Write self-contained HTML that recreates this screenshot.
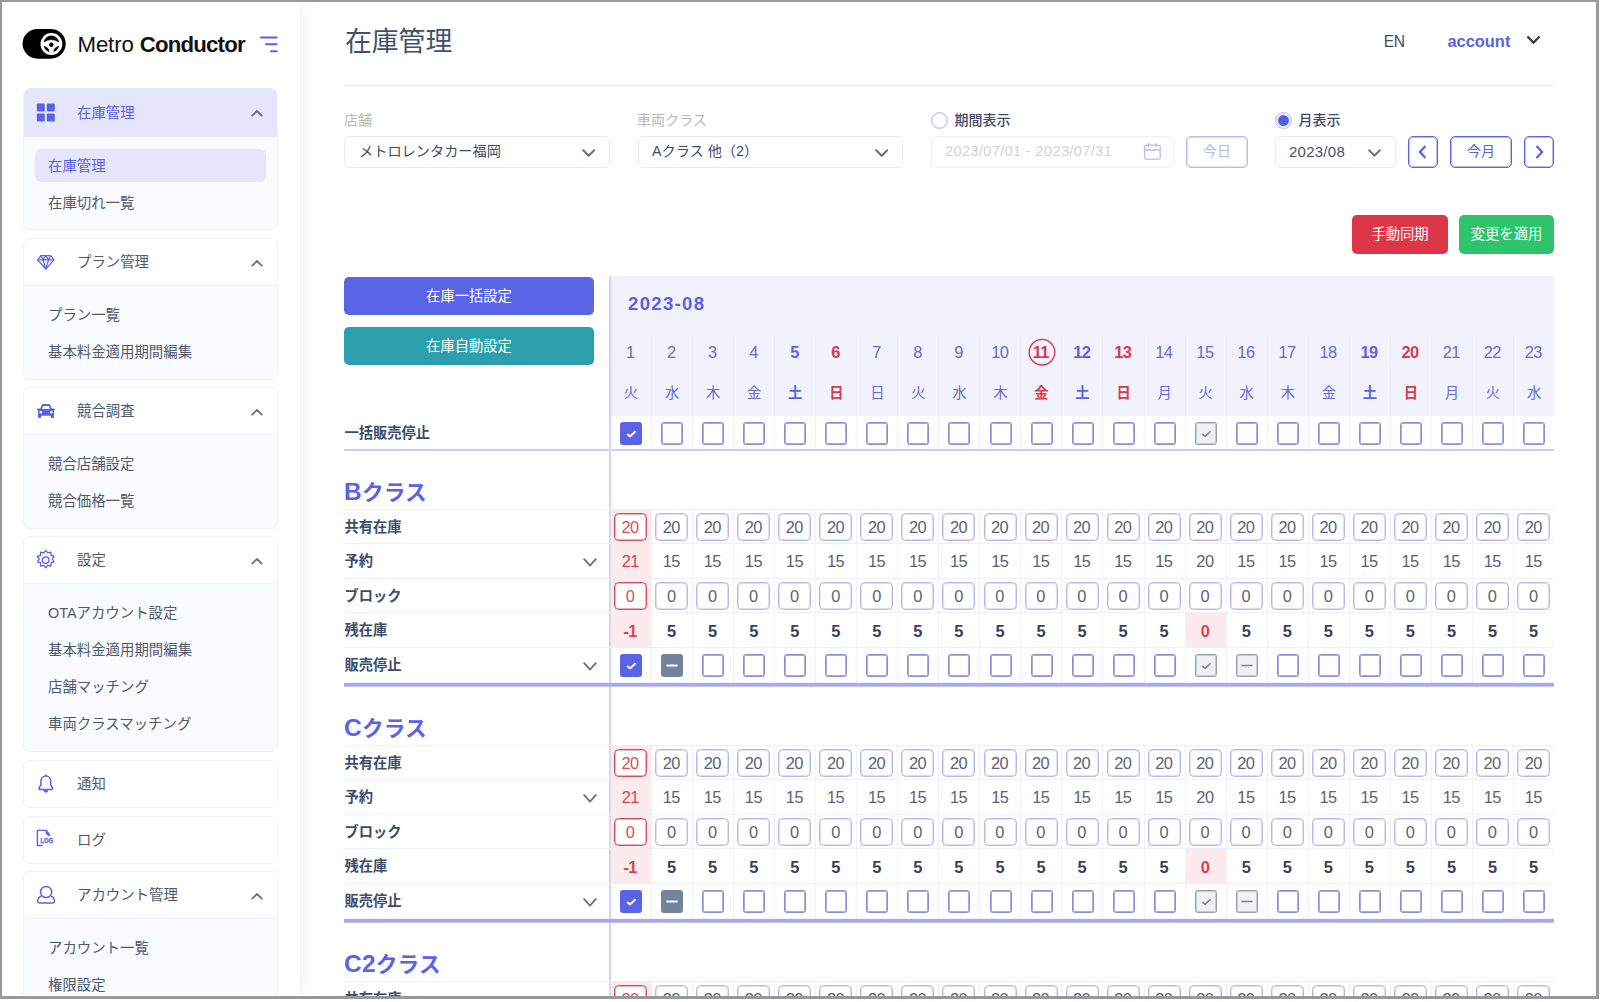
<!DOCTYPE html>
<html lang="ja"><head><meta charset="utf-8"><title>在庫管理 - Metro Conductor</title>
<style>
*{box-sizing:border-box;margin:0;padding:0}
html,body{width:1604px;height:1002px;overflow:hidden;background:#fff}
body{font-family:"Liberation Sans","Noto Sans CJK JP",sans-serif;font-size:14.2px;color:#3f4b66;position:relative}
.abs{position:absolute}
#frame{position:absolute;left:0;top:0;width:1599px;height:999px;overflow:hidden;background:#fff}
#border{position:absolute;left:0;top:0;width:1599px;height:999px;border:solid #999;border-width:2px 3px 3px 2px;z-index:50;pointer-events:none}
#side{position:absolute;left:0;top:0;width:300px;height:999px;background:#fff;box-shadow:0 0 22px rgba(0,0,0,.075);z-index:5}
.logo-txt{position:absolute;left:77.5px;top:32px;font-size:22.2px;line-height:26px;color:#111;letter-spacing:-.1px;white-space:nowrap}
.logo-txt b{font-weight:700;letter-spacing:-.8px}
.card{position:absolute;left:23px;width:255px;border:1px solid #eff0fb;border-radius:7px;background:#fafbff;overflow:hidden}
.card .hd{height:47px;background:#fff;border-bottom:1px solid #eff0fb;position:relative}
.card.act{border-top-color:#e5e6fb}.card.act .hd{background:#e5e6fb;border-bottom-color:#e5e6fb;margin:0 -1px;padding:0 1px}.card.act .hd>*{margin-left:1px}
.card .hd .t{position:absolute;left:53px;top:0;line-height:47px;font-size:14.42px;color:#4f596c}
.card.act .hd .t{color:#5a62e6}
.card .hd svg.ic{position:absolute;left:12px;top:13px}
.card .hd svg.ch{position:absolute;left:226px;top:19px}
.card .it{position:absolute;left:24px;font-size:14.42px;line-height:20px;color:#4f596c;white-space:nowrap}
.card .pill{position:absolute;left:11px;width:231px;height:33px;border-radius:6px;background:#e5e6fb}
h1{position:absolute;left:345px;top:21.5px;font-size:26.8px;line-height:40px;font-weight:400;color:#3e5172;letter-spacing:0}
.hr{position:absolute;left:344px;top:85px;width:1210px;height:1px;background:#e8ebf2}
.lab{position:absolute;font-size:14px;line-height:20px;color:#b7b7b7;white-space:nowrap}
.sel{position:absolute;top:136px;height:32px;border:1px solid #e8eaf2;border-radius:5px;background:#fff;font-size:14.2px;line-height:29px;padding-left:14px;color:#3f4b66;white-space:nowrap;overflow:hidden}
.rl{position:absolute;font-size:14px;line-height:20px;color:#3f4b66;font-weight:500;white-space:nowrap}
.radio{position:absolute;width:17px;height:17px;border-radius:50%;border:1px solid #bbbef3;box-shadow:inset 0 0 0 1px rgba(187,190,243,.45);background:#fff}
.radio.on:after{content:"";position:absolute;left:2px;top:2px;width:11px;height:11px;border-radius:50%;background:#5560e0}
.ob{position:absolute;top:136px;height:32px;border:1px solid #6068e0;box-shadow:inset 0 0 0 1px rgba(96,104,224,.45);border-radius:5px;background:#fff;color:#5a62e6;font-size:14px;line-height:29px;text-align:center}
.btn{position:absolute;color:#fff;border-radius:5px;text-align:center;font-size:14.3px;white-space:nowrap}
#tbl{position:absolute;left:0;top:0}
.vline{position:absolute;left:609px;top:276px;width:3px;height:730px;background:linear-gradient(to right,#d3d5f3 0 1px,#d8daf5 1px 2px,rgba(230,232,251,.6) 2px 3px)}
.thbg{position:absolute;left:611px;top:276px;width:943px;height:140px;background:#f1f2fd}
.cs{position:absolute;width:1px;background:#f0f1fb}
.hl{position:absolute;left:344px;width:1210px;height:1px;background:#eeeff6}
.tk{position:absolute;left:344px;width:1210px;height:5px;background:linear-gradient(to bottom,rgba(168,171,234,.15) 0 1px,#a8abea 1px 4px,rgba(168,171,234,.7) 4px 5px)}
.c{position:absolute;width:41px;text-align:center;line-height:21px;font-size:16.4px;letter-spacing:-.6px;white-space:nowrap;margin-left:-.8px}.wd{font-size:14.3px;font-weight:400;letter-spacing:0;line-height:20px;margin-left:0}.wd.sat,.wd.sun{font-weight:700}
.dn{color:#656cd6}
.sat{color:#5a62e6;font-weight:700}
.sun{color:#d93a4a;font-weight:700}
.rowl{position:absolute;left:344.5px;font-weight:700;font-size:14.25px;line-height:20px;color:#3c4d6c;white-space:nowrap}
.cls b{font-size:24.4px;letter-spacing:.3px}.cls{position:absolute;left:344px;font-weight:700;font-size:21.7px;line-height:30px;color:#5a62e6;white-space:nowrap;letter-spacing:.1px}
.in{position:absolute;width:33px;height:28px;border:1px solid #b6b9ee;box-shadow:inset 0 0 0 1px rgba(182,185,238,.45);border-radius:4.5px;background:#fff;text-align:center;line-height:27px;font-size:16.4px;letter-spacing:-.6px;text-indent:-.8px;color:#5a6374}
.in.r{border-color:#d6505d;box-shadow:inset 0 0 0 1px rgba(214,80,93,.45);color:#d8505e}
.n{color:#5a6374}
.nb{color:#34425e;font-weight:700}
.red{color:#d9434f}
.cb{position:absolute;width:22px;height:23px;border:1px solid #8a8fdc;box-shadow:inset 0 0 0 1px rgba(138,143,220,.75);border-radius:2.5px;background:#fff}
.cb.on{background:#5a63e6;border-color:#5a63e6;box-shadow:none}
.cb.ind{background:#74849c;border-color:#74849c;box-shadow:none}
.cb.dis{background:#eff1f4;border-color:#99a0a9;box-shadow:inset 0 0 0 1px rgba(153,160,169,.45)}
.cb svg{position:absolute;left:-1px;top:-1px}
.pk{position:absolute;background:#fdeaec}
</style></head><body>
<div id="frame">
<div id="side"><svg class="abs" style="left:22px;top:29px" width="45" height="30" viewBox="0 0 45 30">
<rect x="0.6" y="0" width="43.1" height="29.7" rx="14.85" fill="#000"/>
<circle cx="29.4" cy="15" r="10.9" fill="#fff"/>
<path d="M22 12.900 C23.100 9.100 26 6.900 29.4 6.900 C32.800 6.900 35.700 9.100 36.800 12.900 Q29.4 8.200 22 12.900 Z" fill="#000" stroke="#000" stroke-width=".7" stroke-linejoin="round"/>
<circle cx="29.3" cy="15.800" r="2.25" fill="#000"/>
<path d="M22 17.300 A7.9 7.9 0 0 0 26.900 22.600 Q27.300 18.900 22 17.300 Z" fill="#000" stroke="#000" stroke-width=".6" stroke-linejoin="round"/>
<path d="M36.800 17.300 A7.9 7.9 0 0 1 31.900 22.600 Q31.500 18.900 36.800 17.300 Z" fill="#000" stroke="#000" stroke-width=".6" stroke-linejoin="round"/>
</svg><div class="logo-txt">Metro <b>Conductor</b></div><svg class="abs" style="left:259px;top:35px" width="20" height="18" viewBox="0 0 20 18"><g stroke="#5a62e6" stroke-width="2" stroke-linecap="round"><path d="M2 2.4 H17.6"/><path d="M7 9.3 H17.6"/><path d="M12 16.2 H17.6"/></g></svg><div class="card act" style="top:88px;height:142px"><div class="hd" style="height:48px;"><svg class="ic" width="20" height="20" viewBox="0 0 20 20" style="left:12px;top:14px;overflow:visible"><g fill="#5a62e6"><rect x="0.8" y="0.6" width="8" height="8" rx="1"/><rect x="10.8" y="0.6" width="8" height="8" rx="1"/><rect x="0.8" y="10.6" width="8" height="8" rx="1"/><rect x="10.8" y="10.6" width="8" height="8" rx="1"/></g></svg><span class="t" style="line-height:49px">在庫管理</span><svg class="ch" width="13" height="9" viewBox="0 0 13 9"><path d="M2.2 7.6 L7 3 L11.800 7.6" fill="none" stroke="#687287" stroke-width="1.8" stroke-linecap="round" stroke-linejoin="round"/></svg></div><div class="pill" style="top:59.5px"></div><div class="it" style="top:67.1px;color:#5a62e6">在庫管理</div><div class="it" style="top:104.1px">在庫切れ一覧</div></div><div class="card" style="top:238px;height:142px"><div class="hd"><svg class="ic" width="20" height="20" viewBox="0 0 20 20" style="overflow:visible"><g fill="none" stroke="#5a62e6" stroke-width="1.2" stroke-linejoin="round"><path d="M5 3.6 H14.6 L18 7.8 L9.8 17 L1.6 7.8 Z"/><path d="M1.6 7.8 H18 M5 3.6 L7 7.8 L9.8 17 L12.6 7.8 L14.6 3.6 M7 7.8 L9.8 3.6 L12.6 7.8"/></g></svg><span class="t">プラン管理</span><svg class="ch" width="13" height="9" viewBox="0 0 13 9"><path d="M2.2 7.6 L7 3 L11.800 7.6" fill="none" stroke="#687287" stroke-width="1.8" stroke-linecap="round" stroke-linejoin="round"/></svg></div><div class="it" style="top:66.1px">プラン一覧</div><div class="it" style="top:103.1px">基本料金適用期間編集</div></div><div class="card" style="top:387px;height:142px"><div class="hd"><svg class="ic" width="20" height="20" viewBox="0 0 20 20" style="overflow:visible"><path fill="#5a62e6" fill-rule="evenodd" d="M4.2 7.6 L5.6 4.2 C5.9 3.4 6.5 3 7.3 3 H12.7 C13.5 3 14.1 3.4 14.4 4.2 L15.800 7.6 H17.9 C18.5 7.6 18.9 8 18.9 8.5 V8.7 C18.9 9.1 18.5 9.4 18 9.4 H17.6 C17.9 9.8 18 10.3 18 10.8 V16.2 C18 16.7 17.6 17 17.2 17 H15.6 C15.1 17 14.8 16.7 14.8 16.2 V14.8 H5.2 V16.2 C5.2 16.7 4.9 17 4.4 17 H2.8 C2.4 17 2 16.7 2 16.2 V10.8 C2 10.3 2.1 9.8 2.4 9.4 H2 C1.5 9.4 1.1 9.1 1.1 8.700 V8.5 C1.1 8 1.5 7.6 2.1 7.6 Z M7.2 4.9 L6 8 H14 L12.8 4.9 Z M4.7 10.100 A1.35 1.25 0 1 0 4.7 12.600 A1.35 1.25 0 1 0 4.7 10.100 Z M15.3 10.100 A1.35 1.25 0 1 0 15.3 12.600 A1.35 1.25 0 1 0 15.3 10.100 Z"/></svg><span class="t">競合調査</span><svg class="ch" width="13" height="9" viewBox="0 0 13 9"><path d="M2.2 7.6 L7 3 L11.800 7.6" fill="none" stroke="#687287" stroke-width="1.8" stroke-linecap="round" stroke-linejoin="round"/></svg></div><div class="it" style="top:66.1px">競合店舗設定</div><div class="it" style="top:103.1px">競合価格一覧</div></div><div class="card" style="top:536px;height:216px"><div class="hd"><svg class="ic" width="20" height="20" viewBox="0 0 20 20" style="overflow:visible"><g fill="none" stroke="#5a62e6" stroke-width="1.3" stroke-linejoin="round"><circle cx="9.7" cy="10.1" r="3.3"/><path d="M9.80 0.40 L11.81 2.92 L14.91 2.06 L15.06 5.28 L18.07 6.41 L16.30 9.10 L18.07 11.79 L15.06 12.92 L14.91 16.14 L11.81 15.28 L9.80 17.80 L7.79 15.28 L4.69 16.14 L4.54 12.92 L1.53 11.79 L3.30 9.10 L1.53 6.41 L4.54 5.28 L4.69 2.06 L7.79 2.92 Z"/></g></svg><span class="t">設定</span><svg class="ch" width="13" height="9" viewBox="0 0 13 9"><path d="M2.2 7.6 L7 3 L11.800 7.6" fill="none" stroke="#687287" stroke-width="1.8" stroke-linecap="round" stroke-linejoin="round"/></svg></div><div class="it" style="top:66.1px">OTAアカウント設定</div><div class="it" style="top:103.1px">基本料金適用期間編集</div><div class="it" style="top:140.1px">店舗マッチング</div><div class="it" style="top:177.1px">車両クラスマッチング</div></div><div class="card" style="top:760px;height:48px"><div class="hd" style="border-bottom:0;"><svg class="ic" width="20" height="20" viewBox="0 0 20 20" style="overflow:visible"><g fill="none" stroke="#5a62e6" stroke-width="1.5" stroke-linejoin="round" stroke-linecap="round"><path d="M9.8 1.1 V2.1 M9.8 2.1 C6.7 2.1 4.9 4.5 4.9 7.3 V10.4 C4.900 11.800 3 13.200 3 14.4 C3 15.2 3.5 15.600 4.2 15.600 H15.4 C16.1 15.600 16.6 15.2 16.6 14.4 C16.6 13.200 14.7 11.800 14.7 10.4 V7.3 C14.7 4.5 12.9 2.1 9.8 2.1 Z"/></g><path d="M7.700 16.2 A2.1 2.1 0 0 0 11.900 16.2 Z" fill="#5a62e6" stroke="#5a62e6" stroke-width=".8" stroke-linejoin="round"/></svg><span class="t">通知</span></div></div><div class="card" style="top:816px;height:48px"><div class="hd" style="border-bottom:0;"><svg class="ic" width="20" height="20" viewBox="0 0 20 20" style="overflow:visible;top:12px"><path d="M5.8 16.500 H1.400 V1.400 H10.4 L13.800 6.2" fill="none" stroke="#5a62e6" stroke-width="1.4" stroke-linejoin="round" stroke-linecap="round"/><path d="M9.6 1 L14.200 6.9 L12.6 6.9 L9.6 4.4 Z" fill="#5a62e6"/><text x="4.5" y="14.300" font-family="Liberation Sans,sans-serif" font-weight="700" font-size="7.4" fill="#5a62e6" stroke="#5a62e6" stroke-width=".35" textLength="12.6" lengthAdjust="spacingAndGlyphs">LOG</text></svg><span class="t">ログ</span></div></div><div class="card" style="top:871px;height:200px"><div class="hd"><svg class="ic" width="20" height="20" viewBox="0 0 20 20" style="overflow:visible;top:12px"><g fill="none" stroke="#5a62e6" stroke-width="1.5" stroke-linejoin="round"><circle cx="10.100" cy="8" r="5.600"/><path d="M5.400 12 C3 12.900 1.700 15 1.700 17.300 C1.700 18.400 2.400 19 3.400 19 H16.800 C17.800 19 18.500 18.400 18.500 17.300 C18.500 15 17.200 12.900 14.800 12"/></g></svg><span class="t">アカウント管理</span><svg class="ch" width="13" height="9" viewBox="0 0 13 9"><path d="M2.2 7.6 L7 3 L11.800 7.6" fill="none" stroke="#687287" stroke-width="1.8" stroke-linecap="round" stroke-linejoin="round"/></svg></div><div class="it" style="top:66.1px">アカウント一覧</div><div class="it" style="top:103.1px">権限設定</div></div></div>
<div id="main"><h1>在庫管理</h1><div class="abs" style="left:1383.7px;top:31px;font-size:15.6px;line-height:22px;color:#3f4b66;letter-spacing:-.3px">EN</div><div class="abs" style="left:1447.5px;top:30px;font-size:16.4px;line-height:22px;color:#5a62e6;font-weight:700">account</div><svg class="abs" style="left:1526.5px;top:36.3px" width="13" height="8.2" viewBox="0 0 13 8.2"><path d="M1.2 1.2 L6.5 6.799999999999999 L11.8 1.2" fill="none" stroke="#2f3b52" stroke-width="2.3" stroke-linecap="round" stroke-linejoin="round"/></svg><div class="hr"></div><div class="lab" style="left:344px;top:110px">店舗</div><div class="sel" style="left:344px;width:266px">メトロレンタカー福岡</div><svg class="abs" style="left:582px;top:148.5px" width="13.4" height="8.2" viewBox="0 0 13.4 8.2"><path d="M1.2 1.2 L6.7 6.799999999999999 L12.200000000000001 1.2" fill="none" stroke="#667085" stroke-width="2.0" stroke-linecap="round" stroke-linejoin="round"/></svg><div class="lab" style="left:637px;top:110px">車両クラス</div><div class="sel" style="left:638px;width:265px;padding-left:13px">Aクラス 他（2）</div><svg class="abs" style="left:875px;top:148.5px" width="13.4" height="8.2" viewBox="0 0 13.4 8.2"><path d="M1.2 1.2 L6.7 6.799999999999999 L12.200000000000001 1.2" fill="none" stroke="#667085" stroke-width="2.0" stroke-linecap="round" stroke-linejoin="round"/></svg><div class="radio" style="left:931px;top:112px"></div><div class="rl" style="left:954.5px;top:110px">期間表示</div><div class="sel" style="left:931px;width:243px;border-color:#eceef6;color:#d2d2d2;padding-left:13px;font-size:14.6px;letter-spacing:.35px"><span style="display:inline-block;width:168px;overflow:hidden;vertical-align:top">2023/07/01 - 2023/07/31</span></div><svg class="abs" style="left:1143px;top:142px" width="19" height="19" viewBox="0 0 19 19"><g fill="none" stroke="#b9bcf3" stroke-width="1.3"><rect x="1.6" y="3.2" width="15.6" height="14" rx="1.6"/><path d="M1.6 8 H17.2 M5.6 1 V5 M13.2 1 V5"/></g></svg><div class="ob" style="left:1186px;width:62px;border-color:#b9bcf3;box-shadow:inset 0 0 0 1px rgba(185,188,243,.5);color:#b4b8f2">今日</div><div class="radio on" style="left:1275px;top:112px"></div><div class="rl" style="left:1298.5px;top:110px">月表示</div><div class="sel" style="left:1275px;width:121px;font-size:15px;padding-left:13px;letter-spacing:.25px;color:#46526a">2023/08</div><svg class="abs" style="left:1368px;top:148.8px" width="13" height="8" viewBox="0 0 13 8"><path d="M1.2 1.2 L6.5 6.6 L11.8 1.2" fill="none" stroke="#667085" stroke-width="2.0" stroke-linecap="round" stroke-linejoin="round"/></svg><div class="ob" style="left:1408px;width:30px"><svg class="abs" style="left:8px;top:6.5px" width="11" height="16" viewBox="0 0 11 16"><path d="M7.800 2.700 L2.900 8 L7.800 13.300" fill="none" stroke="#5a62e6" stroke-width="2.3" stroke-linecap="round" stroke-linejoin="round"/></svg></div><div class="ob" style="left:1450px;width:62px">今月</div><div class="ob" style="left:1524px;width:30px"><svg class="abs" style="left:9px;top:6.5px" width="11" height="16" viewBox="0 0 11 16"><path d="M3.200 2.700 L8.100 8 L3.200 13.300" fill="none" stroke="#5a62e6" stroke-width="2.3" stroke-linecap="round" stroke-linejoin="round"/></svg></div><div class="btn" style="left:1352px;top:214.5px;width:96px;height:39px;line-height:38px;background:#dd3648">手動同期</div><div class="btn" style="left:1459px;top:214.5px;width:95px;height:39px;line-height:38px;background:#2ec46c">変更を適用</div><div class="btn" style="left:344px;top:277px;width:250px;height:38px;line-height:38px;background:#5a64e6">在庫一括設定</div><div class="btn" style="left:344px;top:327px;width:250px;height:38px;line-height:38px;background:#2b9fab">在庫自動設定</div>
<div id="tbl"><div class="thbg"></div><div class="abs" style="left:628px;top:292.2px;font-size:18.6px;line-height:24px;font-weight:700;color:#5a62e6;letter-spacing:1.3px;white-space:nowrap">2023-08</div><div class="c dn" style="left:610.5px;top:342px">1</div><div class="c wd dn" style="left:610.5px;top:383px">火</div><div class="c dn" style="left:651.6px;top:342px">2</div><div class="c wd dn" style="left:651.6px;top:383px">水</div><div class="c dn" style="left:692.6px;top:342px">3</div><div class="c wd dn" style="left:692.6px;top:383px">木</div><div class="c dn" style="left:733.7px;top:342px">4</div><div class="c wd dn" style="left:733.7px;top:383px">金</div><div class="c sat" style="left:774.7px;top:342px">5</div><div class="c wd sat" style="left:774.7px;top:383px">土</div><div class="c sun" style="left:815.8px;top:342px">6</div><div class="c wd sun" style="left:815.8px;top:383px">日</div><div class="c dn" style="left:856.8px;top:342px">7</div><div class="c wd dn" style="left:856.8px;top:383px">日</div><div class="c dn" style="left:897.9px;top:342px">8</div><div class="c wd dn" style="left:897.9px;top:383px">火</div><div class="c dn" style="left:938.9px;top:342px">9</div><div class="c wd dn" style="left:938.9px;top:383px">水</div><div class="c dn" style="left:980.0px;top:342px">10</div><div class="c wd dn" style="left:980.0px;top:383px">木</div><svg class="abs" style="left:1026.5px;top:337px" width="30" height="30" viewBox="0 0 30 30"><circle cx="15" cy="15.2" r="12.8" fill="none" stroke="#d93a4a" stroke-width="1.4"/></svg><div class="c sun" style="left:1021.0px;top:342px">11</div><div class="c wd sun" style="left:1021.0px;top:383px">金</div><div class="c sat" style="left:1062.0px;top:342px">12</div><div class="c wd sat" style="left:1062.0px;top:383px">土</div><div class="c sun" style="left:1103.1px;top:342px">13</div><div class="c wd sun" style="left:1103.1px;top:383px">日</div><div class="c dn" style="left:1144.1px;top:342px">14</div><div class="c wd dn" style="left:1144.1px;top:383px">月</div><div class="c dn" style="left:1185.2px;top:342px">15</div><div class="c wd dn" style="left:1185.2px;top:383px">火</div><div class="c dn" style="left:1226.2px;top:342px">16</div><div class="c wd dn" style="left:1226.2px;top:383px">水</div><div class="c dn" style="left:1267.3px;top:342px">17</div><div class="c wd dn" style="left:1267.3px;top:383px">木</div><div class="c dn" style="left:1308.3px;top:342px">18</div><div class="c wd dn" style="left:1308.3px;top:383px">金</div><div class="c sat" style="left:1349.4px;top:342px">19</div><div class="c wd sat" style="left:1349.4px;top:383px">土</div><div class="c sun" style="left:1390.4px;top:342px">20</div><div class="c wd sun" style="left:1390.4px;top:383px">日</div><div class="c dn" style="left:1431.5px;top:342px">21</div><div class="c wd dn" style="left:1431.5px;top:383px">月</div><div class="c dn" style="left:1472.5px;top:342px">22</div><div class="c wd dn" style="left:1472.5px;top:383px">火</div><div class="c dn" style="left:1513.6px;top:342px">23</div><div class="c wd dn" style="left:1513.6px;top:383px">水</div><div class="cs" style="left:651px;top:336px;height:80px;background:#eaecf8"></div><div class="cs" style="left:651px;top:416px;height:34px"></div><div class="cs" style="left:692px;top:336px;height:80px;background:#eaecf8"></div><div class="cs" style="left:692px;top:416px;height:34px"></div><div class="cs" style="left:733px;top:336px;height:80px;background:#eaecf8"></div><div class="cs" style="left:733px;top:416px;height:34px"></div><div class="cs" style="left:774px;top:336px;height:80px;background:#eaecf8"></div><div class="cs" style="left:774px;top:416px;height:34px"></div><div class="cs" style="left:815px;top:336px;height:80px;background:#eaecf8"></div><div class="cs" style="left:815px;top:416px;height:34px"></div><div class="cs" style="left:856px;top:336px;height:80px;background:#eaecf8"></div><div class="cs" style="left:856px;top:416px;height:34px"></div><div class="cs" style="left:897px;top:336px;height:80px;background:#eaecf8"></div><div class="cs" style="left:897px;top:416px;height:34px"></div><div class="cs" style="left:938px;top:336px;height:80px;background:#eaecf8"></div><div class="cs" style="left:938px;top:416px;height:34px"></div><div class="cs" style="left:979px;top:336px;height:80px;background:#eaecf8"></div><div class="cs" style="left:979px;top:416px;height:34px"></div><div class="cs" style="left:1020px;top:336px;height:80px;background:#eaecf8"></div><div class="cs" style="left:1020px;top:416px;height:34px"></div><div class="cs" style="left:1061px;top:336px;height:80px;background:#eaecf8"></div><div class="cs" style="left:1061px;top:416px;height:34px"></div><div class="cs" style="left:1102px;top:336px;height:80px;background:#eaecf8"></div><div class="cs" style="left:1102px;top:416px;height:34px"></div><div class="cs" style="left:1144px;top:336px;height:80px;background:#eaecf8"></div><div class="cs" style="left:1144px;top:416px;height:34px"></div><div class="cs" style="left:1185px;top:336px;height:80px;background:#eaecf8"></div><div class="cs" style="left:1185px;top:416px;height:34px"></div><div class="cs" style="left:1226px;top:336px;height:80px;background:#eaecf8"></div><div class="cs" style="left:1226px;top:416px;height:34px"></div><div class="cs" style="left:1267px;top:336px;height:80px;background:#eaecf8"></div><div class="cs" style="left:1267px;top:416px;height:34px"></div><div class="cs" style="left:1308px;top:336px;height:80px;background:#eaecf8"></div><div class="cs" style="left:1308px;top:416px;height:34px"></div><div class="cs" style="left:1349px;top:336px;height:80px;background:#eaecf8"></div><div class="cs" style="left:1349px;top:416px;height:34px"></div><div class="cs" style="left:1390px;top:336px;height:80px;background:#eaecf8"></div><div class="cs" style="left:1390px;top:416px;height:34px"></div><div class="cs" style="left:1431px;top:336px;height:80px;background:#eaecf8"></div><div class="cs" style="left:1431px;top:416px;height:34px"></div><div class="cs" style="left:1472px;top:336px;height:80px;background:#eaecf8"></div><div class="cs" style="left:1472px;top:416px;height:34px"></div><div class="cs" style="left:1513px;top:336px;height:80px;background:#eaecf8"></div><div class="cs" style="left:1513px;top:416px;height:34px"></div><div class="rowl" style="top:423.2px">一括販売停止</div><div class="cb on" style="left:620.0px;top:421.5px"><svg width="22" height="23" viewBox="0 0 22 23"><path d="M7.7 12.5 L10.2 14.4 L15 9.8" fill="none" stroke="#fff" stroke-width="2" stroke-linecap="round" stroke-linejoin="round"/></svg></div><div class="cb" style="left:661.1px;top:421.5px"></div><div class="cb" style="left:702.1px;top:421.5px"></div><div class="cb" style="left:743.2px;top:421.5px"></div><div class="cb" style="left:784.2px;top:421.5px"></div><div class="cb" style="left:825.3px;top:421.5px"></div><div class="cb" style="left:866.3px;top:421.5px"></div><div class="cb" style="left:907.4px;top:421.5px"></div><div class="cb" style="left:948.4px;top:421.5px"></div><div class="cb" style="left:989.5px;top:421.5px"></div><div class="cb" style="left:1030.5px;top:421.5px"></div><div class="cb" style="left:1071.5px;top:421.5px"></div><div class="cb" style="left:1112.6px;top:421.5px"></div><div class="cb" style="left:1153.6px;top:421.5px"></div><div class="cb dis" style="left:1194.7px;top:421.5px"><svg width="22" height="23" viewBox="0 0 22 23"><path d="M7.7 12.5 L10.2 14.4 L15 9.8" fill="none" stroke="#7a828c" stroke-width="1.5" stroke-linecap="round" stroke-linejoin="round"/></svg></div><div class="cb" style="left:1235.7px;top:421.5px"></div><div class="cb" style="left:1276.8px;top:421.5px"></div><div class="cb" style="left:1317.8px;top:421.5px"></div><div class="cb" style="left:1358.9px;top:421.5px"></div><div class="cb" style="left:1399.9px;top:421.5px"></div><div class="cb" style="left:1441.0px;top:421.5px"></div><div class="cb" style="left:1482.0px;top:421.5px"></div><div class="cb" style="left:1523.1px;top:421.5px"></div><div class="hl" style="top:449px;background:#c9ccf4;height:1.5px"></div><div class="vline"></div><div class="cls" style="top:477px"><b>B</b>クラス</div><div class="pk" style="left:611px;top:510px;width:40px;height:138px"></div><div class="pk" style="left:1186px;top:613px;width:40px;height:35px"></div><div class="hl" style="top:509px"></div><div class="hl" style="top:543px"></div><div class="hl" style="top:578px"></div><div class="hl" style="top:612px"></div><div class="hl" style="top:647px"></div><div class="cs" style="left:651px;top:510px;height:173px"></div><div class="cs" style="left:692px;top:510px;height:173px"></div><div class="cs" style="left:733px;top:510px;height:173px"></div><div class="cs" style="left:774px;top:510px;height:173px"></div><div class="cs" style="left:815px;top:510px;height:173px"></div><div class="cs" style="left:856px;top:510px;height:173px"></div><div class="cs" style="left:897px;top:510px;height:173px"></div><div class="cs" style="left:938px;top:510px;height:173px"></div><div class="cs" style="left:979px;top:510px;height:173px"></div><div class="cs" style="left:1020px;top:510px;height:173px"></div><div class="cs" style="left:1061px;top:510px;height:173px"></div><div class="cs" style="left:1102px;top:510px;height:173px"></div><div class="cs" style="left:1144px;top:510px;height:173px"></div><div class="cs" style="left:1185px;top:510px;height:173px"></div><div class="cs" style="left:1226px;top:510px;height:173px"></div><div class="cs" style="left:1267px;top:510px;height:173px"></div><div class="cs" style="left:1308px;top:510px;height:173px"></div><div class="cs" style="left:1349px;top:510px;height:173px"></div><div class="cs" style="left:1390px;top:510px;height:173px"></div><div class="cs" style="left:1431px;top:510px;height:173px"></div><div class="cs" style="left:1472px;top:510px;height:173px"></div><div class="cs" style="left:1513px;top:510px;height:173px"></div><div class="rowl" style="top:516.8px">共有在庫</div><div class="rowl" style="top:551.0px">予約</div><svg class="abs" style="left:582.5px;top:557.9px" width="14" height="9" viewBox="0 0 14 9"><path d="M1.2 1.2 L7.0 7.6 L12.8 1.2" fill="none" stroke="#6b7486" stroke-width="1.9" stroke-linecap="round" stroke-linejoin="round"/></svg><div class="rowl" style="top:585.7px">ブロック</div><div class="rowl" style="top:620.4px">残在庫</div><div class="rowl" style="top:655.2px">販売停止</div><svg class="abs" style="left:582.5px;top:662.15px" width="14" height="9" viewBox="0 0 14 9"><path d="M1.2 1.2 L7.0 7.6 L12.8 1.2" fill="none" stroke="#6b7486" stroke-width="1.9" stroke-linecap="round" stroke-linejoin="round"/></svg><div class="in r" style="left:614.0px;top:513.2px">20</div><div class="c red" style="left:610.5px;top:551.4px">21</div><div class="in r" style="left:614.0px;top:582.1px">0</div><div class="c nb red" style="left:610.5px;top:620.8px">-1</div><div class="cb on" style="left:620.0px;top:654.1px"><svg width="22" height="23" viewBox="0 0 22 23"><path d="M7.7 12.5 L10.2 14.4 L15 9.8" fill="none" stroke="#fff" stroke-width="2" stroke-linecap="round" stroke-linejoin="round"/></svg></div><div class="in" style="left:655.1px;top:513.2px">20</div><div class="c n" style="left:651.6px;top:551.4px">15</div><div class="in" style="left:655.1px;top:582.1px">0</div><div class="c nb" style="left:651.6px;top:620.8px">5</div><div class="cb ind" style="left:661.1px;top:654.1px"><svg width="22" height="23" viewBox="0 0 22 23"><path d="M6.2 11.5 H15.8" fill="none" stroke="#fff" stroke-width="2" stroke-linecap="round"/></svg></div><div class="in" style="left:696.1px;top:513.2px">20</div><div class="c n" style="left:692.6px;top:551.4px">15</div><div class="in" style="left:696.1px;top:582.1px">0</div><div class="c nb" style="left:692.6px;top:620.8px">5</div><div class="cb" style="left:702.1px;top:654.1px"></div><div class="in" style="left:737.2px;top:513.2px">20</div><div class="c n" style="left:733.7px;top:551.4px">15</div><div class="in" style="left:737.2px;top:582.1px">0</div><div class="c nb" style="left:733.7px;top:620.8px">5</div><div class="cb" style="left:743.2px;top:654.1px"></div><div class="in" style="left:778.2px;top:513.2px">20</div><div class="c n" style="left:774.7px;top:551.4px">15</div><div class="in" style="left:778.2px;top:582.1px">0</div><div class="c nb" style="left:774.7px;top:620.8px">5</div><div class="cb" style="left:784.2px;top:654.1px"></div><div class="in" style="left:819.3px;top:513.2px">20</div><div class="c n" style="left:815.8px;top:551.4px">15</div><div class="in" style="left:819.3px;top:582.1px">0</div><div class="c nb" style="left:815.8px;top:620.8px">5</div><div class="cb" style="left:825.3px;top:654.1px"></div><div class="in" style="left:860.3px;top:513.2px">20</div><div class="c n" style="left:856.8px;top:551.4px">15</div><div class="in" style="left:860.3px;top:582.1px">0</div><div class="c nb" style="left:856.8px;top:620.8px">5</div><div class="cb" style="left:866.3px;top:654.1px"></div><div class="in" style="left:901.4px;top:513.2px">20</div><div class="c n" style="left:897.9px;top:551.4px">15</div><div class="in" style="left:901.4px;top:582.1px">0</div><div class="c nb" style="left:897.9px;top:620.8px">5</div><div class="cb" style="left:907.4px;top:654.1px"></div><div class="in" style="left:942.4px;top:513.2px">20</div><div class="c n" style="left:938.9px;top:551.4px">15</div><div class="in" style="left:942.4px;top:582.1px">0</div><div class="c nb" style="left:938.9px;top:620.8px">5</div><div class="cb" style="left:948.4px;top:654.1px"></div><div class="in" style="left:983.5px;top:513.2px">20</div><div class="c n" style="left:980.0px;top:551.4px">15</div><div class="in" style="left:983.5px;top:582.1px">0</div><div class="c nb" style="left:980.0px;top:620.8px">5</div><div class="cb" style="left:989.5px;top:654.1px"></div><div class="in" style="left:1024.5px;top:513.2px">20</div><div class="c n" style="left:1021.0px;top:551.4px">15</div><div class="in" style="left:1024.5px;top:582.1px">0</div><div class="c nb" style="left:1021.0px;top:620.8px">5</div><div class="cb" style="left:1030.5px;top:654.1px"></div><div class="in" style="left:1065.5px;top:513.2px">20</div><div class="c n" style="left:1062.0px;top:551.4px">15</div><div class="in" style="left:1065.5px;top:582.1px">0</div><div class="c nb" style="left:1062.0px;top:620.8px">5</div><div class="cb" style="left:1071.5px;top:654.1px"></div><div class="in" style="left:1106.6px;top:513.2px">20</div><div class="c n" style="left:1103.1px;top:551.4px">15</div><div class="in" style="left:1106.6px;top:582.1px">0</div><div class="c nb" style="left:1103.1px;top:620.8px">5</div><div class="cb" style="left:1112.6px;top:654.1px"></div><div class="in" style="left:1147.6px;top:513.2px">20</div><div class="c n" style="left:1144.1px;top:551.4px">15</div><div class="in" style="left:1147.6px;top:582.1px">0</div><div class="c nb" style="left:1144.1px;top:620.8px">5</div><div class="cb" style="left:1153.6px;top:654.1px"></div><div class="in" style="left:1188.7px;top:513.2px">20</div><div class="c n" style="left:1185.2px;top:551.4px">20</div><div class="in" style="left:1188.7px;top:582.1px">0</div><div class="c nb red" style="left:1185.2px;top:620.8px">0</div><div class="cb dis" style="left:1194.7px;top:654.1px"><svg width="22" height="23" viewBox="0 0 22 23"><path d="M7.7 12.5 L10.2 14.4 L15 9.8" fill="none" stroke="#7a828c" stroke-width="1.5" stroke-linecap="round" stroke-linejoin="round"/></svg></div><div class="in" style="left:1229.7px;top:513.2px">20</div><div class="c n" style="left:1226.2px;top:551.4px">15</div><div class="in" style="left:1229.7px;top:582.1px">0</div><div class="c nb" style="left:1226.2px;top:620.8px">5</div><div class="cb dis" style="left:1235.7px;top:654.1px"><svg width="22" height="23" viewBox="0 0 22 23"><path d="M6.2 11.5 H15.8" fill="none" stroke="#7a828c" stroke-width="1.5" stroke-linecap="round"/></svg></div><div class="in" style="left:1270.8px;top:513.2px">20</div><div class="c n" style="left:1267.3px;top:551.4px">15</div><div class="in" style="left:1270.8px;top:582.1px">0</div><div class="c nb" style="left:1267.3px;top:620.8px">5</div><div class="cb" style="left:1276.8px;top:654.1px"></div><div class="in" style="left:1311.8px;top:513.2px">20</div><div class="c n" style="left:1308.3px;top:551.4px">15</div><div class="in" style="left:1311.8px;top:582.1px">0</div><div class="c nb" style="left:1308.3px;top:620.8px">5</div><div class="cb" style="left:1317.8px;top:654.1px"></div><div class="in" style="left:1352.9px;top:513.2px">20</div><div class="c n" style="left:1349.4px;top:551.4px">15</div><div class="in" style="left:1352.9px;top:582.1px">0</div><div class="c nb" style="left:1349.4px;top:620.8px">5</div><div class="cb" style="left:1358.9px;top:654.1px"></div><div class="in" style="left:1393.9px;top:513.2px">20</div><div class="c n" style="left:1390.4px;top:551.4px">15</div><div class="in" style="left:1393.9px;top:582.1px">0</div><div class="c nb" style="left:1390.4px;top:620.8px">5</div><div class="cb" style="left:1399.9px;top:654.1px"></div><div class="in" style="left:1435.0px;top:513.2px">20</div><div class="c n" style="left:1431.5px;top:551.4px">15</div><div class="in" style="left:1435.0px;top:582.1px">0</div><div class="c nb" style="left:1431.5px;top:620.8px">5</div><div class="cb" style="left:1441.0px;top:654.1px"></div><div class="in" style="left:1476.0px;top:513.2px">20</div><div class="c n" style="left:1472.5px;top:551.4px">15</div><div class="in" style="left:1476.0px;top:582.1px">0</div><div class="c nb" style="left:1472.5px;top:620.8px">5</div><div class="cb" style="left:1482.0px;top:654.1px"></div><div class="in" style="left:1517.1px;top:513.2px">20</div><div class="c n" style="left:1513.6px;top:551.4px">15</div><div class="in" style="left:1517.1px;top:582.1px">0</div><div class="c nb" style="left:1513.6px;top:620.8px">5</div><div class="cb" style="left:1523.1px;top:654.1px"></div><div class="tk" style="top:682px"></div><div class="cls" style="top:713px"><b>C</b>クラス</div><div class="pk" style="left:611px;top:746px;width:40px;height:138px"></div><div class="pk" style="left:1186px;top:849px;width:40px;height:35px"></div><div class="hl" style="top:745px"></div><div class="hl" style="top:779px"></div><div class="hl" style="top:814px"></div><div class="hl" style="top:848px"></div><div class="hl" style="top:883px"></div><div class="cs" style="left:651px;top:746px;height:173px"></div><div class="cs" style="left:692px;top:746px;height:173px"></div><div class="cs" style="left:733px;top:746px;height:173px"></div><div class="cs" style="left:774px;top:746px;height:173px"></div><div class="cs" style="left:815px;top:746px;height:173px"></div><div class="cs" style="left:856px;top:746px;height:173px"></div><div class="cs" style="left:897px;top:746px;height:173px"></div><div class="cs" style="left:938px;top:746px;height:173px"></div><div class="cs" style="left:979px;top:746px;height:173px"></div><div class="cs" style="left:1020px;top:746px;height:173px"></div><div class="cs" style="left:1061px;top:746px;height:173px"></div><div class="cs" style="left:1102px;top:746px;height:173px"></div><div class="cs" style="left:1144px;top:746px;height:173px"></div><div class="cs" style="left:1185px;top:746px;height:173px"></div><div class="cs" style="left:1226px;top:746px;height:173px"></div><div class="cs" style="left:1267px;top:746px;height:173px"></div><div class="cs" style="left:1308px;top:746px;height:173px"></div><div class="cs" style="left:1349px;top:746px;height:173px"></div><div class="cs" style="left:1390px;top:746px;height:173px"></div><div class="cs" style="left:1431px;top:746px;height:173px"></div><div class="cs" style="left:1472px;top:746px;height:173px"></div><div class="cs" style="left:1513px;top:746px;height:173px"></div><div class="rowl" style="top:752.8px">共有在庫</div><div class="rowl" style="top:787.0px">予約</div><svg class="abs" style="left:582.5px;top:793.9px" width="14" height="9" viewBox="0 0 14 9"><path d="M1.2 1.2 L7.0 7.6 L12.8 1.2" fill="none" stroke="#6b7486" stroke-width="1.9" stroke-linecap="round" stroke-linejoin="round"/></svg><div class="rowl" style="top:821.7px">ブロック</div><div class="rowl" style="top:856.4px">残在庫</div><div class="rowl" style="top:891.2px">販売停止</div><svg class="abs" style="left:582.5px;top:898.15px" width="14" height="9" viewBox="0 0 14 9"><path d="M1.2 1.2 L7.0 7.6 L12.8 1.2" fill="none" stroke="#6b7486" stroke-width="1.9" stroke-linecap="round" stroke-linejoin="round"/></svg><div class="in r" style="left:614.0px;top:749.2px">20</div><div class="c red" style="left:610.5px;top:787.4px">21</div><div class="in r" style="left:614.0px;top:818.1px">0</div><div class="c nb red" style="left:610.5px;top:856.8px">-1</div><div class="cb on" style="left:620.0px;top:890.1px"><svg width="22" height="23" viewBox="0 0 22 23"><path d="M7.7 12.5 L10.2 14.4 L15 9.8" fill="none" stroke="#fff" stroke-width="2" stroke-linecap="round" stroke-linejoin="round"/></svg></div><div class="in" style="left:655.1px;top:749.2px">20</div><div class="c n" style="left:651.6px;top:787.4px">15</div><div class="in" style="left:655.1px;top:818.1px">0</div><div class="c nb" style="left:651.6px;top:856.8px">5</div><div class="cb ind" style="left:661.1px;top:890.1px"><svg width="22" height="23" viewBox="0 0 22 23"><path d="M6.2 11.5 H15.8" fill="none" stroke="#fff" stroke-width="2" stroke-linecap="round"/></svg></div><div class="in" style="left:696.1px;top:749.2px">20</div><div class="c n" style="left:692.6px;top:787.4px">15</div><div class="in" style="left:696.1px;top:818.1px">0</div><div class="c nb" style="left:692.6px;top:856.8px">5</div><div class="cb" style="left:702.1px;top:890.1px"></div><div class="in" style="left:737.2px;top:749.2px">20</div><div class="c n" style="left:733.7px;top:787.4px">15</div><div class="in" style="left:737.2px;top:818.1px">0</div><div class="c nb" style="left:733.7px;top:856.8px">5</div><div class="cb" style="left:743.2px;top:890.1px"></div><div class="in" style="left:778.2px;top:749.2px">20</div><div class="c n" style="left:774.7px;top:787.4px">15</div><div class="in" style="left:778.2px;top:818.1px">0</div><div class="c nb" style="left:774.7px;top:856.8px">5</div><div class="cb" style="left:784.2px;top:890.1px"></div><div class="in" style="left:819.3px;top:749.2px">20</div><div class="c n" style="left:815.8px;top:787.4px">15</div><div class="in" style="left:819.3px;top:818.1px">0</div><div class="c nb" style="left:815.8px;top:856.8px">5</div><div class="cb" style="left:825.3px;top:890.1px"></div><div class="in" style="left:860.3px;top:749.2px">20</div><div class="c n" style="left:856.8px;top:787.4px">15</div><div class="in" style="left:860.3px;top:818.1px">0</div><div class="c nb" style="left:856.8px;top:856.8px">5</div><div class="cb" style="left:866.3px;top:890.1px"></div><div class="in" style="left:901.4px;top:749.2px">20</div><div class="c n" style="left:897.9px;top:787.4px">15</div><div class="in" style="left:901.4px;top:818.1px">0</div><div class="c nb" style="left:897.9px;top:856.8px">5</div><div class="cb" style="left:907.4px;top:890.1px"></div><div class="in" style="left:942.4px;top:749.2px">20</div><div class="c n" style="left:938.9px;top:787.4px">15</div><div class="in" style="left:942.4px;top:818.1px">0</div><div class="c nb" style="left:938.9px;top:856.8px">5</div><div class="cb" style="left:948.4px;top:890.1px"></div><div class="in" style="left:983.5px;top:749.2px">20</div><div class="c n" style="left:980.0px;top:787.4px">15</div><div class="in" style="left:983.5px;top:818.1px">0</div><div class="c nb" style="left:980.0px;top:856.8px">5</div><div class="cb" style="left:989.5px;top:890.1px"></div><div class="in" style="left:1024.5px;top:749.2px">20</div><div class="c n" style="left:1021.0px;top:787.4px">15</div><div class="in" style="left:1024.5px;top:818.1px">0</div><div class="c nb" style="left:1021.0px;top:856.8px">5</div><div class="cb" style="left:1030.5px;top:890.1px"></div><div class="in" style="left:1065.5px;top:749.2px">20</div><div class="c n" style="left:1062.0px;top:787.4px">15</div><div class="in" style="left:1065.5px;top:818.1px">0</div><div class="c nb" style="left:1062.0px;top:856.8px">5</div><div class="cb" style="left:1071.5px;top:890.1px"></div><div class="in" style="left:1106.6px;top:749.2px">20</div><div class="c n" style="left:1103.1px;top:787.4px">15</div><div class="in" style="left:1106.6px;top:818.1px">0</div><div class="c nb" style="left:1103.1px;top:856.8px">5</div><div class="cb" style="left:1112.6px;top:890.1px"></div><div class="in" style="left:1147.6px;top:749.2px">20</div><div class="c n" style="left:1144.1px;top:787.4px">15</div><div class="in" style="left:1147.6px;top:818.1px">0</div><div class="c nb" style="left:1144.1px;top:856.8px">5</div><div class="cb" style="left:1153.6px;top:890.1px"></div><div class="in" style="left:1188.7px;top:749.2px">20</div><div class="c n" style="left:1185.2px;top:787.4px">20</div><div class="in" style="left:1188.7px;top:818.1px">0</div><div class="c nb red" style="left:1185.2px;top:856.8px">0</div><div class="cb dis" style="left:1194.7px;top:890.1px"><svg width="22" height="23" viewBox="0 0 22 23"><path d="M7.7 12.5 L10.2 14.4 L15 9.8" fill="none" stroke="#7a828c" stroke-width="1.5" stroke-linecap="round" stroke-linejoin="round"/></svg></div><div class="in" style="left:1229.7px;top:749.2px">20</div><div class="c n" style="left:1226.2px;top:787.4px">15</div><div class="in" style="left:1229.7px;top:818.1px">0</div><div class="c nb" style="left:1226.2px;top:856.8px">5</div><div class="cb dis" style="left:1235.7px;top:890.1px"><svg width="22" height="23" viewBox="0 0 22 23"><path d="M6.2 11.5 H15.8" fill="none" stroke="#7a828c" stroke-width="1.5" stroke-linecap="round"/></svg></div><div class="in" style="left:1270.8px;top:749.2px">20</div><div class="c n" style="left:1267.3px;top:787.4px">15</div><div class="in" style="left:1270.8px;top:818.1px">0</div><div class="c nb" style="left:1267.3px;top:856.8px">5</div><div class="cb" style="left:1276.8px;top:890.1px"></div><div class="in" style="left:1311.8px;top:749.2px">20</div><div class="c n" style="left:1308.3px;top:787.4px">15</div><div class="in" style="left:1311.8px;top:818.1px">0</div><div class="c nb" style="left:1308.3px;top:856.8px">5</div><div class="cb" style="left:1317.8px;top:890.1px"></div><div class="in" style="left:1352.9px;top:749.2px">20</div><div class="c n" style="left:1349.4px;top:787.4px">15</div><div class="in" style="left:1352.9px;top:818.1px">0</div><div class="c nb" style="left:1349.4px;top:856.8px">5</div><div class="cb" style="left:1358.9px;top:890.1px"></div><div class="in" style="left:1393.9px;top:749.2px">20</div><div class="c n" style="left:1390.4px;top:787.4px">15</div><div class="in" style="left:1393.9px;top:818.1px">0</div><div class="c nb" style="left:1390.4px;top:856.8px">5</div><div class="cb" style="left:1399.9px;top:890.1px"></div><div class="in" style="left:1435.0px;top:749.2px">20</div><div class="c n" style="left:1431.5px;top:787.4px">15</div><div class="in" style="left:1435.0px;top:818.1px">0</div><div class="c nb" style="left:1431.5px;top:856.8px">5</div><div class="cb" style="left:1441.0px;top:890.1px"></div><div class="in" style="left:1476.0px;top:749.2px">20</div><div class="c n" style="left:1472.5px;top:787.4px">15</div><div class="in" style="left:1476.0px;top:818.1px">0</div><div class="c nb" style="left:1472.5px;top:856.8px">5</div><div class="cb" style="left:1482.0px;top:890.1px"></div><div class="in" style="left:1517.1px;top:749.2px">20</div><div class="c n" style="left:1513.6px;top:787.4px">15</div><div class="in" style="left:1517.1px;top:818.1px">0</div><div class="c nb" style="left:1513.6px;top:856.8px">5</div><div class="cb" style="left:1523.1px;top:890.1px"></div><div class="tk" style="top:918px"></div><div class="cls" style="top:949px"><b>C2</b>クラス</div><div class="pk" style="left:611px;top:982px;width:40px;height:138px"></div><div class="pk" style="left:1186px;top:1085px;width:40px;height:35px"></div><div class="hl" style="top:981px"></div><div class="hl" style="top:1015px"></div><div class="hl" style="top:1050px"></div><div class="hl" style="top:1084px"></div><div class="hl" style="top:1119px"></div><div class="cs" style="left:651px;top:982px;height:173px"></div><div class="cs" style="left:692px;top:982px;height:173px"></div><div class="cs" style="left:733px;top:982px;height:173px"></div><div class="cs" style="left:774px;top:982px;height:173px"></div><div class="cs" style="left:815px;top:982px;height:173px"></div><div class="cs" style="left:856px;top:982px;height:173px"></div><div class="cs" style="left:897px;top:982px;height:173px"></div><div class="cs" style="left:938px;top:982px;height:173px"></div><div class="cs" style="left:979px;top:982px;height:173px"></div><div class="cs" style="left:1020px;top:982px;height:173px"></div><div class="cs" style="left:1061px;top:982px;height:173px"></div><div class="cs" style="left:1102px;top:982px;height:173px"></div><div class="cs" style="left:1144px;top:982px;height:173px"></div><div class="cs" style="left:1185px;top:982px;height:173px"></div><div class="cs" style="left:1226px;top:982px;height:173px"></div><div class="cs" style="left:1267px;top:982px;height:173px"></div><div class="cs" style="left:1308px;top:982px;height:173px"></div><div class="cs" style="left:1349px;top:982px;height:173px"></div><div class="cs" style="left:1390px;top:982px;height:173px"></div><div class="cs" style="left:1431px;top:982px;height:173px"></div><div class="cs" style="left:1472px;top:982px;height:173px"></div><div class="cs" style="left:1513px;top:982px;height:173px"></div><div class="rowl" style="top:988.8px">共有在庫</div><div class="rowl" style="top:1023.0px">予約</div><svg class="abs" style="left:582.5px;top:1029.9px" width="14" height="9" viewBox="0 0 14 9"><path d="M1.2 1.2 L7.0 7.6 L12.8 1.2" fill="none" stroke="#6b7486" stroke-width="1.9" stroke-linecap="round" stroke-linejoin="round"/></svg><div class="rowl" style="top:1057.7px">ブロック</div><div class="rowl" style="top:1092.3px">残在庫</div><div class="rowl" style="top:1127.2px">販売停止</div><svg class="abs" style="left:582.5px;top:1134.15px" width="14" height="9" viewBox="0 0 14 9"><path d="M1.2 1.2 L7.0 7.6 L12.8 1.2" fill="none" stroke="#6b7486" stroke-width="1.9" stroke-linecap="round" stroke-linejoin="round"/></svg><div class="in r" style="left:614.0px;top:985.2px">20</div><div class="c red" style="left:610.5px;top:1023.4px">21</div><div class="in r" style="left:614.0px;top:1054.1px">0</div><div class="c nb red" style="left:610.5px;top:1092.8px">-1</div><div class="cb on" style="left:620.0px;top:1126.2px"><svg width="22" height="23" viewBox="0 0 22 23"><path d="M7.7 12.5 L10.2 14.4 L15 9.8" fill="none" stroke="#fff" stroke-width="2" stroke-linecap="round" stroke-linejoin="round"/></svg></div><div class="in" style="left:655.1px;top:985.2px">20</div><div class="c n" style="left:651.6px;top:1023.4px">15</div><div class="in" style="left:655.1px;top:1054.1px">0</div><div class="c nb" style="left:651.6px;top:1092.8px">5</div><div class="cb ind" style="left:661.1px;top:1126.2px"><svg width="22" height="23" viewBox="0 0 22 23"><path d="M6.2 11.5 H15.8" fill="none" stroke="#fff" stroke-width="2" stroke-linecap="round"/></svg></div><div class="in" style="left:696.1px;top:985.2px">20</div><div class="c n" style="left:692.6px;top:1023.4px">15</div><div class="in" style="left:696.1px;top:1054.1px">0</div><div class="c nb" style="left:692.6px;top:1092.8px">5</div><div class="cb" style="left:702.1px;top:1126.2px"></div><div class="in" style="left:737.2px;top:985.2px">20</div><div class="c n" style="left:733.7px;top:1023.4px">15</div><div class="in" style="left:737.2px;top:1054.1px">0</div><div class="c nb" style="left:733.7px;top:1092.8px">5</div><div class="cb" style="left:743.2px;top:1126.2px"></div><div class="in" style="left:778.2px;top:985.2px">20</div><div class="c n" style="left:774.7px;top:1023.4px">15</div><div class="in" style="left:778.2px;top:1054.1px">0</div><div class="c nb" style="left:774.7px;top:1092.8px">5</div><div class="cb" style="left:784.2px;top:1126.2px"></div><div class="in" style="left:819.3px;top:985.2px">20</div><div class="c n" style="left:815.8px;top:1023.4px">15</div><div class="in" style="left:819.3px;top:1054.1px">0</div><div class="c nb" style="left:815.8px;top:1092.8px">5</div><div class="cb" style="left:825.3px;top:1126.2px"></div><div class="in" style="left:860.3px;top:985.2px">20</div><div class="c n" style="left:856.8px;top:1023.4px">15</div><div class="in" style="left:860.3px;top:1054.1px">0</div><div class="c nb" style="left:856.8px;top:1092.8px">5</div><div class="cb" style="left:866.3px;top:1126.2px"></div><div class="in" style="left:901.4px;top:985.2px">20</div><div class="c n" style="left:897.9px;top:1023.4px">15</div><div class="in" style="left:901.4px;top:1054.1px">0</div><div class="c nb" style="left:897.9px;top:1092.8px">5</div><div class="cb" style="left:907.4px;top:1126.2px"></div><div class="in" style="left:942.4px;top:985.2px">20</div><div class="c n" style="left:938.9px;top:1023.4px">15</div><div class="in" style="left:942.4px;top:1054.1px">0</div><div class="c nb" style="left:938.9px;top:1092.8px">5</div><div class="cb" style="left:948.4px;top:1126.2px"></div><div class="in" style="left:983.5px;top:985.2px">20</div><div class="c n" style="left:980.0px;top:1023.4px">15</div><div class="in" style="left:983.5px;top:1054.1px">0</div><div class="c nb" style="left:980.0px;top:1092.8px">5</div><div class="cb" style="left:989.5px;top:1126.2px"></div><div class="in" style="left:1024.5px;top:985.2px">20</div><div class="c n" style="left:1021.0px;top:1023.4px">15</div><div class="in" style="left:1024.5px;top:1054.1px">0</div><div class="c nb" style="left:1021.0px;top:1092.8px">5</div><div class="cb" style="left:1030.5px;top:1126.2px"></div><div class="in" style="left:1065.5px;top:985.2px">20</div><div class="c n" style="left:1062.0px;top:1023.4px">15</div><div class="in" style="left:1065.5px;top:1054.1px">0</div><div class="c nb" style="left:1062.0px;top:1092.8px">5</div><div class="cb" style="left:1071.5px;top:1126.2px"></div><div class="in" style="left:1106.6px;top:985.2px">20</div><div class="c n" style="left:1103.1px;top:1023.4px">15</div><div class="in" style="left:1106.6px;top:1054.1px">0</div><div class="c nb" style="left:1103.1px;top:1092.8px">5</div><div class="cb" style="left:1112.6px;top:1126.2px"></div><div class="in" style="left:1147.6px;top:985.2px">20</div><div class="c n" style="left:1144.1px;top:1023.4px">15</div><div class="in" style="left:1147.6px;top:1054.1px">0</div><div class="c nb" style="left:1144.1px;top:1092.8px">5</div><div class="cb" style="left:1153.6px;top:1126.2px"></div><div class="in" style="left:1188.7px;top:985.2px">20</div><div class="c n" style="left:1185.2px;top:1023.4px">20</div><div class="in" style="left:1188.7px;top:1054.1px">0</div><div class="c nb red" style="left:1185.2px;top:1092.8px">0</div><div class="cb dis" style="left:1194.7px;top:1126.2px"><svg width="22" height="23" viewBox="0 0 22 23"><path d="M7.7 12.5 L10.2 14.4 L15 9.8" fill="none" stroke="#7a828c" stroke-width="1.5" stroke-linecap="round" stroke-linejoin="round"/></svg></div><div class="in" style="left:1229.7px;top:985.2px">20</div><div class="c n" style="left:1226.2px;top:1023.4px">15</div><div class="in" style="left:1229.7px;top:1054.1px">0</div><div class="c nb" style="left:1226.2px;top:1092.8px">5</div><div class="cb dis" style="left:1235.7px;top:1126.2px"><svg width="22" height="23" viewBox="0 0 22 23"><path d="M6.2 11.5 H15.8" fill="none" stroke="#7a828c" stroke-width="1.5" stroke-linecap="round"/></svg></div><div class="in" style="left:1270.8px;top:985.2px">20</div><div class="c n" style="left:1267.3px;top:1023.4px">15</div><div class="in" style="left:1270.8px;top:1054.1px">0</div><div class="c nb" style="left:1267.3px;top:1092.8px">5</div><div class="cb" style="left:1276.8px;top:1126.2px"></div><div class="in" style="left:1311.8px;top:985.2px">20</div><div class="c n" style="left:1308.3px;top:1023.4px">15</div><div class="in" style="left:1311.8px;top:1054.1px">0</div><div class="c nb" style="left:1308.3px;top:1092.8px">5</div><div class="cb" style="left:1317.8px;top:1126.2px"></div><div class="in" style="left:1352.9px;top:985.2px">20</div><div class="c n" style="left:1349.4px;top:1023.4px">15</div><div class="in" style="left:1352.9px;top:1054.1px">0</div><div class="c nb" style="left:1349.4px;top:1092.8px">5</div><div class="cb" style="left:1358.9px;top:1126.2px"></div><div class="in" style="left:1393.9px;top:985.2px">20</div><div class="c n" style="left:1390.4px;top:1023.4px">15</div><div class="in" style="left:1393.9px;top:1054.1px">0</div><div class="c nb" style="left:1390.4px;top:1092.8px">5</div><div class="cb" style="left:1399.9px;top:1126.2px"></div><div class="in" style="left:1435.0px;top:985.2px">20</div><div class="c n" style="left:1431.5px;top:1023.4px">15</div><div class="in" style="left:1435.0px;top:1054.1px">0</div><div class="c nb" style="left:1431.5px;top:1092.8px">5</div><div class="cb" style="left:1441.0px;top:1126.2px"></div><div class="in" style="left:1476.0px;top:985.2px">20</div><div class="c n" style="left:1472.5px;top:1023.4px">15</div><div class="in" style="left:1476.0px;top:1054.1px">0</div><div class="c nb" style="left:1472.5px;top:1092.8px">5</div><div class="cb" style="left:1482.0px;top:1126.2px"></div><div class="in" style="left:1517.1px;top:985.2px">20</div><div class="c n" style="left:1513.6px;top:1023.4px">15</div><div class="in" style="left:1517.1px;top:1054.1px">0</div><div class="c nb" style="left:1513.6px;top:1092.8px">5</div><div class="cb" style="left:1523.1px;top:1126.2px"></div><div class="tk" style="top:1154px"></div></div>
</div>
</div>
<div id="border"></div>
</body></html>
